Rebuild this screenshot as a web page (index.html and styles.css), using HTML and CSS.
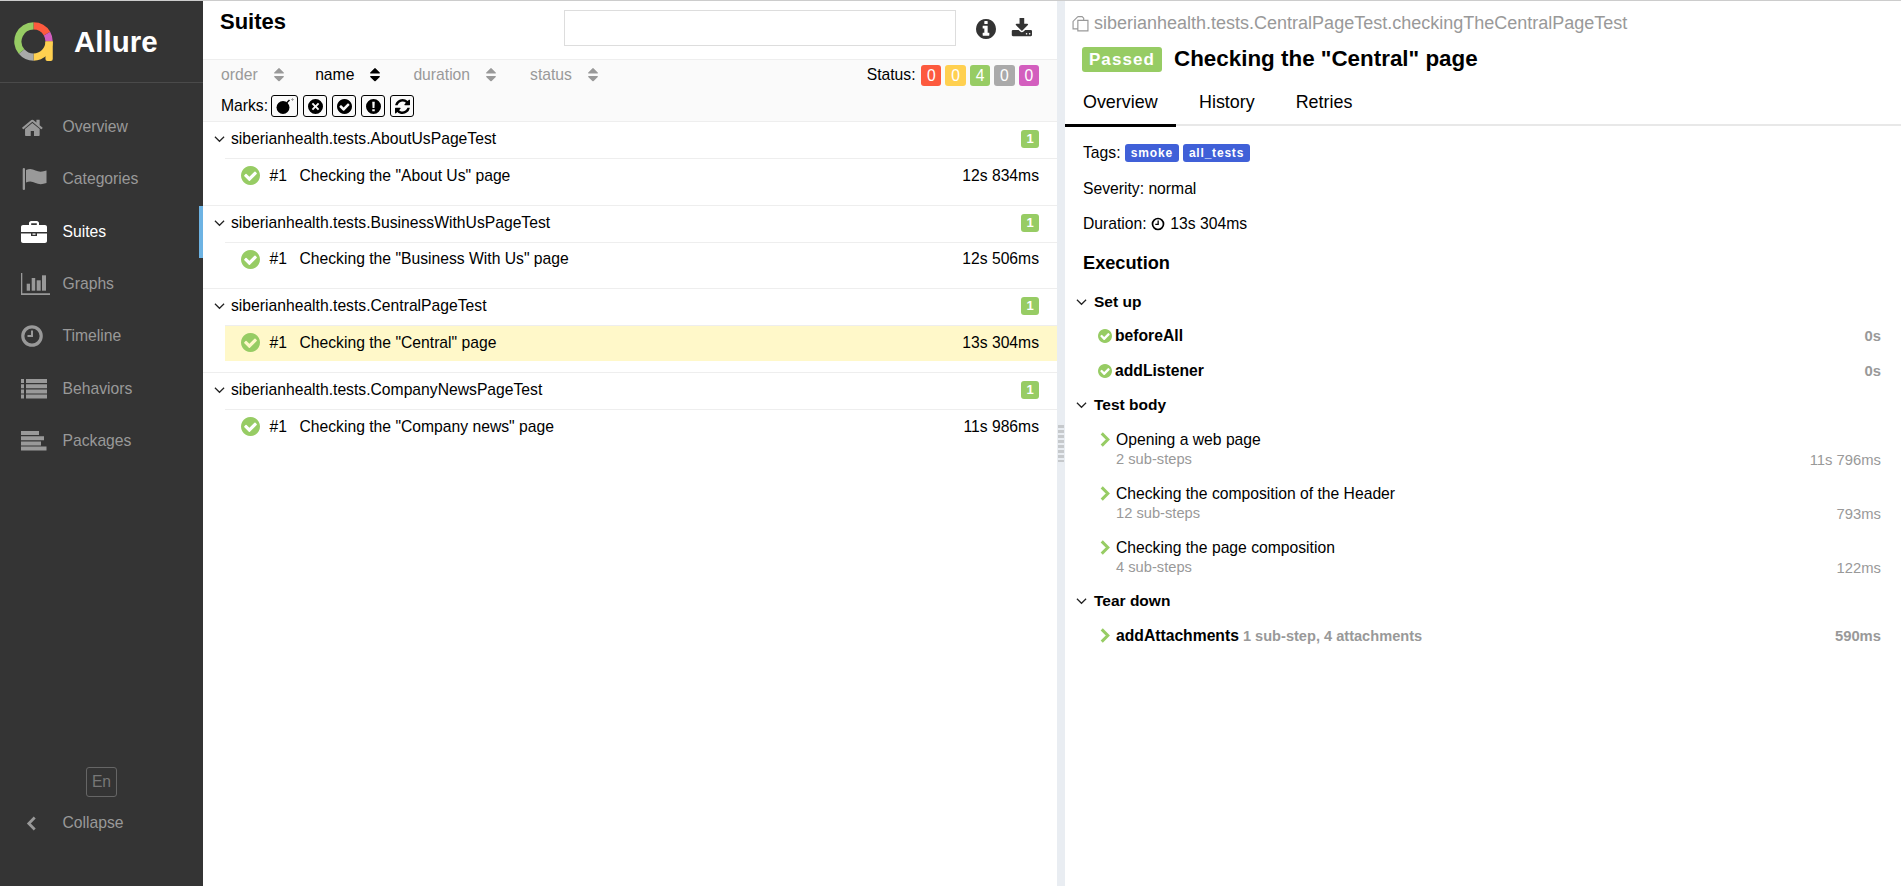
FILE: index.html
```html
<!DOCTYPE html>
<html lang="en">
<head>
<meta charset="utf-8">
<title>Allure Report</title>
<link rel="stylesheet" href="styles.css">
</head>
<body>
<svg class="defs" width="0" height="0" aria-hidden="true">
  <symbol id="i-sort" viewBox="384 192 1024 1408"><path d="M1408 1088q0 26-19 45l-448 448q-19 19-45 19t-45-19l-448-448q-19-19-19-45t19-45 45-19h896q26 0 45 19t19 45zm0-384q0 26-19 45t-45 19h-896q-26 0-45-19t-19-45 19-45l448-448q19-19 45-19t45 19l448 448q19 19 19 45z"/></symbol>
  <symbol id="i-check" viewBox="128 128 1536 1536"><path d="M1412 734q0-28-18-46l-91-90q-19-19-45-19t-45 19l-408 407-226-226q-19-19-45-19t-45 19l-91 90q-18 18-18 46 0 27 18 45l362 362q19 19 45 19 27 0 46-19l543-543q18-18 18-45zm252 162q0 209-103 385.500t-279.500 279.500-385.500 103-385.500-103-279.500-279.500-103-385.500 103-385.500 279.500-279.500 385.500-103 385.500 103 279.500 279.500 103 385.500z"/></symbol>
  <symbol id="i-down" viewBox="0 0 12 8"><path d="M1 1.500 6 6.500 11 1.500" fill="none" stroke="currentColor" stroke-width="1.300"/></symbol>
  <symbol id="i-right" viewBox="0 0 12 16"><path d="M2.500 1.500 9 8 2.500 14.500" fill="none" stroke="currentColor" stroke-width="3.200"/></symbol>
</svg>

<div class="app">
  <aside class="side">
    <div class="brand">
      <svg class="logo" viewBox="0 0 40 40">
        <g fill="none" stroke-width="7.500">
          <path stroke="#fd5a3e" d="M20 4A16 16 0 0 1 33.860 12"/>
          <path stroke="#d35ebe" d="M33.860 12A16 16 0 0 1 36 20"/>
          <path stroke="#ffd050" d="M36 20A16 16 0 0 1 20 36"/>
          <path stroke="#aaa" d="M20 36A16 16 0 0 1 7.740 30.280"/>
          <path stroke="#97cc64" d="M7.740 30.280A16 16 0 0 1 20 4"/>
        </g>
        <path fill="#ffd050" d="M32.250 20h7.500v18a2 2 0 0 1-2 2h-3.500a2 2 0 0 1-2-2z"/>
      </svg>
      <span class="brand-name">Allure</span>
    </div>
    <nav class="nav">
      <a class="nav-item"><svg class="nav-icon" viewBox="0 -36 2052 1736"><path d="M1472 992v480q0 26-19 45t-45 19h-384v-384h-256v384h-384q-26 0-45-19t-19-45v-480q0-1 .5-3t.5-3l575-474 575 474q1 2 1 6zm223-69l-62 74q-8 9-21 11h-3q-13 0-21-7l-692-577-692 577q-12 8-24 7-13-2-21-11l-62-74q-8-10-7-23.500t11-21.500l719-599q32-26 76-26t76 26l244 204v-195q0-14 9-23t23-9h192q14 0 23 9t9 23v408l219 182q10 8 11 21.500t-7 23.500z"/></svg><span>Overview</span></a>
      <a class="nav-item"><svg class="nav-icon" viewBox="0 0 26 22"><rect x="1.700" y="0" width="2.300" height="22" rx="1.100"/><path d="M5 2C8.500 .5 11.500 1 14.500 2.500s7 1.500 11 0v12.500c-4 1.500-8 1.500-11 0s-6-2-9.500-.5z"/></svg><span>Categories</span></a>
      <a class="nav-item active"><svg class="nav-icon" viewBox="0 0 26 22"><path d="M8 4V2.200C8 1 9 0 10.200 0h5.600C17 0 18 1 18 2.200V4h6c1.100 0 2 .9 2 2v5H0V6c0-1.100.9-2 2-2zm2.200 0h5.600V2.200h-5.600zM0 12.500h10V15h6v-2.500h10V20c0 1.100-.9 2-2 2H2c-1.100 0-2-.9-2-2zM11.500 12.500h3v1.200h-3z"/></svg><span>Suites</span></a>
      <a class="nav-item"><svg class="nav-icon wide" viewBox="0 0 29 22"><path d="M0 0h1.300v20.200H29V22H0z"/><rect x="5.700" y="10.700" width="3.300" height="7"/><rect x="10.700" y="5" width="3.500" height="12.700"/><rect x="15.700" y="7.300" width="4" height="10.400"/><rect x="21" y="2.300" width="4" height="15.400"/></svg><span>Graphs</span></a>
      <a class="nav-item"><svg class="nav-icon" viewBox="0 0 26 22"><circle cx="11" cy="11" r="9.200" fill="none" stroke="currentColor" stroke-width="3.200"/><path d="M10 5.500h2V12H6.500v-2H10z"/></svg><span>Timeline</span></a>
      <a class="nav-item"><svg class="nav-icon" viewBox="0 0 26 22"><path d="M0 1h3v4H0zM5 1h21v4H5zM0 6.200h3v4H0zM5 6.200h21v4H5zM0 11.400h3v4H0zM5 11.400h21v4H5zM0 16.600h3v4H0zM5 16.600h21v4H5z"/></svg><span>Behaviors</span></a>
      <a class="nav-item"><svg class="nav-icon" viewBox="0 0 26 22"><path d="M0 1h18v4H0zM0 6.200h23v4H0zM0 11.400h20v4H0zM0 16.600h25.500v4H0z"/></svg><span>Packages</span></a>
    </nav>
    <div class="side-foot">
      <div class="lang">En</div>
      <a class="collapse"><svg class="collapse-icon" viewBox="0 0 10 14"><path d="M8 1.500 2.500 7 8 12.500" fill="none" stroke="currentColor" stroke-width="2.600"/></svg><span>Collapse</span></a>
    </div>
  </aside>

  <main class="list-pane">
    <header class="list-head">
      <h1 class="list-title">Suites</h1>
      <div class="search"></div>
      <svg class="head-icon info" viewBox="128 128 1536 1536"><path d="M1152 1376v-160q0-14-9-23t-23-9h-96v-512q0-14-9-23t-23-9h-320q-14 0-23 9t-9 23v160q0 14 9 23t23 9h96v320h-96q-14 0-23 9t-9 23v160q0 14 9 23t23 9h448q14 0 23-9t9-23zm-128-896v-160q0-14-9-23t-23-9h-192q-14 0-23 9t-9 23v160q0 14 9 23t23 9h192q14 0 23-9t9-23zm640 416q0 209-103 385.500t-279.500 279.500-385.500 103-385.500-103-279.500-279.500-103-385.500 103-385.500 279.500-279.500 385.500-103 385.500 103 279.500 279.500 103 385.500z"/></svg>
      <svg class="head-icon dl" viewBox="0 192 1728 1344"><path d="M1344 1344q0-26-19-45t-45-19-45 19-19 45 19 45 45 19 45-19 19-45zm256 0q0-26-19-45t-45-19-45 19-19 45 19 45 45 19 45-19 19-45zm128-224v320q0 40-28 68t-68 28h-1472q-40 0-68-28t-28-68v-320q0-40 28-68t68-28h465l135 136q58 56 136 56t136-56l136-136h464q40 0 68 28t28 68zm-325-569q17 41-14 70l-448 448q-18 19-45 19t-45-19l-448-448q-31-29-14-70 17-39 59-39h256v-448q0-26 19-45t45-19h256q26 0 45 19t19 45v448h256q42 0 59 39z"/></svg>
    </header>
    <section class="filters">
      <div class="filter-row">
        <span class="sort s-order">order<svg class="sort-icon"><use href="#i-sort"/></svg></span>
        <span class="sort s-name sorted">name<svg class="sort-icon"><use href="#i-sort"/></svg></span>
        <span class="sort s-duration">duration<svg class="sort-icon"><use href="#i-sort"/></svg></span>
        <span class="sort s-status">status<svg class="sort-icon"><use href="#i-sort"/></svg></span>
        <div class="status">
          <span class="status-label">Status:</span>
          <span class="st red">0</span><span class="st yellow">0</span><span class="st green">4</span><span class="st gray">0</span><span class="st pink">0</span>
        </div>
      </div>
      <div class="marks">
        <span class="marks-label">Marks:</span>
        <span class="mark wide"><svg viewBox="0 0 20 16"><circle cx="8" cy="9.500" r="6.500"/><path d="M11.500 5l3-3" stroke="#000" stroke-width="1.500"/><path d="M16 1.500h3M17.500 0v3" stroke="#888" stroke-width=".7"/></svg></span>
        <span class="mark"><svg viewBox="128 128 1536 1536"><path d="M896 128a768 768 0 1 0 0 1536a768 768 0 0 0 0-1536zM1280 650l-246 246 246 246-138 138-246-246-246 246-138-138 246-246-246-246 138-138 246 246 246-246z"/></svg></span>
        <span class="mark"><svg><use href="#i-check"/></svg></span>
        <span class="mark"><svg viewBox="128 128 1536 1536"><path d="M896 128a768 768 0 1 0 0 1536a768 768 0 0 0 0-1536zM768 400h256l-30 650H798zM768 1170h256v224H768z"/></svg></span>
        <span class="mark"><svg viewBox="128 128 1536 1536"><path d="M1639 1056q0 5-1 7-64 268-268 434.500t-478 166.500q-146 0-282.500-55t-243.500-157l-129 129q-19 19-45 19t-45-19-19-45v-448q0-26 19-45t45-19h448q26 0 45 19t19 45-19 45l-137 137q71 66 161 102t187 36q134 0 250-65t186-179q11-17 53-117 8-23 30-23h192q13 0 22.500 9.500t9.500 22.500zm25-800v448q0 26-19 45t-45 19h-448q-26 0-45-19t-19-45 19-45l138-138q-148-137-349-137-134 0-250 65t-186 179q-11 17-53 117-8 23-30 23h-199q-13 0-22.500-9.500t-9.500-22.500v-7q65-268 270-434.500t480-166.500q146 0 284 55.500t245 156.500l130-129q19-19 45-19t45 19 19 45z"/></svg></span>
      </div>
    </section>
    <section class="groups">
      <div class="group">
        <div class="group-head"><svg class="caret"><use href="#i-down"/></svg><span class="group-name">siberianhealth.tests.AboutUsPageTest</span><span class="count">1</span></div>
        <div class="row"><svg class="ok"><use href="#i-check"/></svg><span class="order">#1</span><span class="row-name">Checking the "About Us" page</span><span class="row-time">12s 834ms</span></div>
      </div>
      <div class="group">
        <div class="group-head"><svg class="caret"><use href="#i-down"/></svg><span class="group-name">siberianhealth.tests.BusinessWithUsPageTest</span><span class="count">1</span></div>
        <div class="row"><svg class="ok"><use href="#i-check"/></svg><span class="order">#1</span><span class="row-name">Checking the "Business With Us" page</span><span class="row-time">12s 506ms</span></div>
      </div>
      <div class="group">
        <div class="group-head"><svg class="caret"><use href="#i-down"/></svg><span class="group-name">siberianhealth.tests.CentralPageTest</span><span class="count">1</span></div>
        <div class="row selected"><svg class="ok"><use href="#i-check"/></svg><span class="order">#1</span><span class="row-name">Checking the "Central" page</span><span class="row-time">13s 304ms</span></div>
      </div>
      <div class="group last">
        <div class="group-head"><svg class="caret"><use href="#i-down"/></svg><span class="group-name">siberianhealth.tests.CompanyNewsPageTest</span><span class="count">1</span></div>
        <div class="row"><svg class="ok"><use href="#i-check"/></svg><span class="order">#1</span><span class="row-name">Checking the "Company news" page</span><span class="row-time">11s 986ms</span></div>
      </div>
    </section>
  </main>

  <div class="gutter"><div class="grip"></div></div>

  <section class="detail">
    <div class="full-name"><svg class="copy" viewBox="0 0 16 16"><path d="M5.500 1.500h4l1.500 1.500v1.500M5.500 1.500 1 6v7h4.500M5.500 5H15v10H5.500z" fill="none" stroke="currentColor" stroke-width="1.100"/></svg><span>siberianhealth.tests.CentralPageTest.checkingTheCentralPageTest</span></div>
    <h2 class="detail-title"><span class="passed">Passed</span><span>Checking the "Central" page</span></h2>
    <div class="tabs"><span class="tab current">Overview</span><span class="tab">History</span><span class="tab">Retries</span></div>
    <div class="info-line tags-line">Tags: <span class="tag">smoke</span><span class="tag">all_tests</span></div>
    <div class="info-line">Severity: normal</div>
    <div class="info-line">Duration: <svg class="clock" viewBox="0 0 14 14"><circle cx="7" cy="7" r="5.500" fill="none" stroke="#000" stroke-width="1.700"/><path d="M6.500 3.500h1.300V8H4.300V6.800h2.200z"/></svg> 13s 304ms</div>
    <h3 class="exec">Execution</h3>

    <div class="stage"><svg class="caret"><use href="#i-down"/></svg>Set up</div>
    <div class="step"><svg class="step-ok"><use href="#i-check"/></svg><b>beforeAll</b><b class="t">0s</b></div>
    <div class="step"><svg class="step-ok"><use href="#i-check"/></svg><b>addListener</b><b class="t">0s</b></div>

    <div class="stage"><svg class="caret"><use href="#i-down"/></svg>Test body</div>
    <div class="step tall"><svg class="step-arrow"><use href="#i-right"/></svg><div class="step-text"><div>Opening a web page</div><div class="sub">2 sub-steps</div></div><span class="t">11s 796ms</span></div>
    <div class="step tall"><svg class="step-arrow"><use href="#i-right"/></svg><div class="step-text"><div>Checking the composition of the Header</div><div class="sub">12 sub-steps</div></div><span class="t">793ms</span></div>
    <div class="step tall"><svg class="step-arrow"><use href="#i-right"/></svg><div class="step-text"><div>Checking the page composition</div><div class="sub">4 sub-steps</div></div><span class="t">122ms</span></div>

    <div class="stage"><svg class="caret"><use href="#i-down"/></svg>Tear down</div>
    <div class="step"><svg class="step-arrow"><use href="#i-right"/></svg><b>addAttachments</b><b class="extra">1 sub-step, 4 attachments</b><b class="t">590ms</b></div>
  </section>
</div>
</body>
</html>
```
FILE: styles.css
```css
* { box-sizing: border-box; }
html, body { height: 100%; }
body {
  margin: 0;
  overflow: hidden;
  border-top: 1px solid #ccc;
  font-family: "Liberation Sans", Arial, sans-serif;
  font-size: 15.700px;
  color: #000;
  background: #fff;
}
.defs { position: absolute; }
.app { display: flex; height: 885px; }

/* sidebar */
.side {
  width: 203px;
  flex: none;
  display: flex;
  flex-direction: column;
  background: #343434;
  color: #999;
}
.brand {
  height: 82px;
  flex: none;
  display: flex;
  align-items: center;
  padding-left: 14px;
  border-bottom: 1px solid #4a4a4a;
}
.logo { width: 39px; height: 39px; flex: none; }
.brand-name {
  margin-left: 21px;
  color: #fff;
  font-size: 29.500px;
  font-weight: 700;
}
.nav { padding-top: 18px; }
.nav-item {
  height: 52.300px;
  display: flex;
  align-items: center;
  padding-left: 21px;
  border-right: 4px solid transparent;
}
.nav-icon {
  width: 26px;
  height: 22px;
  margin-right: 15.500px;
  flex: none;
  fill: #999;
  color: #999;
}
.nav-icon.wide { width: 29px; margin-right: 12.500px; }
.nav-item.active { color: #fff; border-right-color: #6db3e3; }
.nav-item.active .nav-icon { fill: #fff; }
.side-foot {
  margin-top: auto;
  padding-bottom: 47px;
}
.lang {
  width: 31px;
  height: 30.500px;
  margin-left: 86px;
  border: 1px solid #666;
  border-radius: 3px;
  color: #777;
  text-align: center;
  line-height: 28px;
}
.collapse {
  display: flex;
  align-items: center;
  height: 32px;
  margin-top: 10px;
  padding-left: 26px;
}
.collapse-icon { width: 11px; height: 15px; margin-right: 25.500px; color: #999; }

/* list pane */
.list-pane { width: 854px; flex: none; display: flex; flex-direction: column; }
.list-head {
  height: 58px;
  flex: none;
  display: flex;
  align-items: flex-start;
  padding: 9px 0 0 17px;
}
.list-title { margin: 0; font-size: 22px; line-height: 24px; font-weight: 700; width: 344px; }
.search { width: 392px; height: 36px; border: 1px solid #ddd; }
.head-icon { fill: #333; flex: none; }
.info { width: 20px; height: 20px; margin: 9px 0 0 20px; }
.dl { width: 21px; height: 20px; margin: 7.500px 0 0 15px; }

.filters {
  height: 63px;
  flex: none;
  padding: 0 18px 0 18px;
  background: #fafafa;
  border-top: 1px solid #eee;
  border-bottom: 1px solid #eee;
}
.filter-row { height: 30px; display: flex; align-items: center; }
.sort { display: flex; align-items: center; color: #999; }
.sort.sorted { color: #000; }
.sort-icon { width: 10px; height: 13.500px; margin-left: 16px; fill: #999; }
.sorted .sort-icon { fill: #000; }
.s-name { margin-left: 31.500px; }
.s-duration { margin-left: 33px; }
.s-status { margin-left: 34px; }
.status { margin-left: auto; display: flex; align-items: center; }
.status-label { margin-right: 1.500px; }
.st {
  width: 20.400px;
  height: 21px;
  margin-left: 4px;
  border-radius: 3px;
  color: #fff;
  text-align: center;
  line-height: 21px;
}
.red { background: #fd5a3e; }
.yellow { background: #ffd050; }
.green { background: #97cc64; }
.gray { background: #aaa; }
.pink { background: #d35ebe; }
.marks { display: flex; align-items: center; height: 22px; margin-top: 5px; }
.marks-label { margin-right: 3px; }
.mark {
  width: 24px;
  height: 22px;
  margin-right: 5px;
  display: flex;
  align-items: center;
  justify-content: center;
  border: 1px solid #000;
  border-radius: 3px;
}
.mark.wide { width: 27px; }
.mark svg { width: 15px; height: 15px; }
.mark.wide svg { width: 20px; height: 16px; }

.groups { flex: 1; }
.group { height: 83.700px; border-bottom: 1px solid #eee; }
.group.last { border-bottom: 0; }
.group-head {
  height: 36px;
  display: flex;
  align-items: center;
  padding: 0 18px 2px 11px;
}
.caret { width: 11px; height: 8px; margin-right: 6px; flex: none; color: #222; }
.group-name { flex: 1; }
.count {
  width: 18px;
  height: 18px;
  border-radius: 3px;
  background: #97cc64;
  color: #fff;
  font-size: 13px;
  font-weight: 700;
  text-align: center;
  line-height: 18px;
}
.row {
  height: 36px;
  margin-left: 22px;
  display: flex;
  align-items: center;
  padding: 0 18px 2px 15.500px;
  border-top: 1px solid #eee;
}
.ok { width: 19px; height: 19px; fill: #97cc64; flex: none; }
.order { margin-left: 10px; width: 30px; }
.row-name { flex: 1; }
.row.selected { background: #fff8c9; }

/* gutter */
.gutter {
  width: 8px;
  flex: none;
  background: #e9edf2;
  display: flex;
  justify-content: center;
  padding-top: 424px;
}
.grip {
  width: 6px;
  height: 37px;
  background: repeating-linear-gradient(to bottom, #c6c9cc 0 3px, transparent 3px 5px);
}

/* detail */
.detail { flex: 1; padding: 0 20px 0 17px; min-width: 0; }
.full-name {
  display: flex;
  align-items: center;
  height: 44px;
  margin-left: -10px;
  color: #999;
  font-size: 18px;
}
.copy { width: 17px; height: 17px; margin-right: 5px; color: #999; flex: none; }
.detail-title {
  display: flex;
  align-items: center;
  height: 26px;
  margin: 1px 0 0 0;
  font-size: 22.400px;
  font-weight: 700;
}
.passed {
  width: 80px;
  height: 25px;
  margin-right: 12px;
  border-radius: 3px;
  background: #97cc64;
  color: #fff;
  font-size: 17px;
  letter-spacing: 1.100px;
  text-align: center;
  line-height: 25px;
}
.tabs {
  display: flex;
  height: 54px;
  margin: 0 -20px 0 -17px;
  border-bottom: 2px solid #e8e8e8;
  font-size: 17.900px;
}
.tab { padding: 20px 18px 0 23px; }
.tab.current { padding: 20px 0 0 18px; width: 111px; height: 52px; box-shadow: 0 3px 0 0 #000; }
.info-line { height: 35.700px; display: flex; align-items: center; white-space: pre; padding-left: 1px; }
.tags-line { margin-top: 9px; }
.tag {
  height: 18px;
  margin-left: 4px;
  padding: 0 6px;
  border-radius: 3px;
  background: #4060d8;
  color: #fff;
  font-size: 12px;
  font-weight: 700;
  letter-spacing: .8px;
  line-height: 18px;
}
.tags-line .tag:first-child { margin-left: 0; }
.clock { width: 14px; height: 14px; margin: 0 1px 0 0; }
.exec { margin: 10.500px 0 11px 1px; font-size: 18.200px; font-weight: 700; line-height: 21px; }
.stage {
  height: 34.500px;
  margin-left: -6px;
  display: flex;
  align-items: center;
  font-weight: 700;
  font-size: 15.500px;
}
.stage .caret { margin-right: 7px; }
.step {
  min-height: 34.300px;
  margin-left: 15px;
  display: flex;
  align-items: center;
}
.step.tall { height: 54px; align-items: flex-start; padding-top: 9px; }
.step-ok { width: 14px; height: 14px; margin: 0 3px 0 1px; fill: #97cc64; flex: none; }
.step-arrow { width: 12px; height: 15px; margin: 0 5px 0 2px; color: #97cc64; flex: none; }
.step.tall .step-arrow { margin-top: 1px; }
.step-text { flex: 1; line-height: 18px; }
.sub { margin-top: 1px; color: #999; font-size: 14.700px; }
.t { margin-left: auto; color: #999; font-size: 14.800px; }
.step.tall .t { margin-top: 21px; }
.extra { margin-left: 4px; color: #999; font-size: 14.600px; }
```
